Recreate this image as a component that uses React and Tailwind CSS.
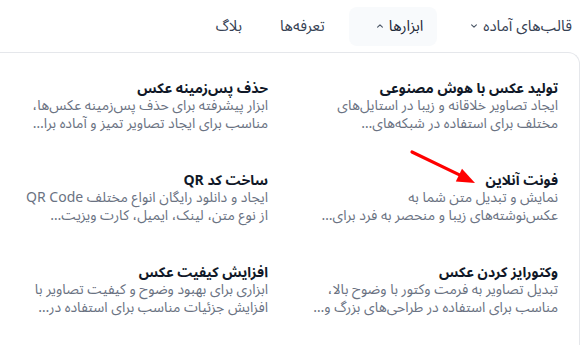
import React from "react";

const items = [
  {
    title: "تولید عکس با هوش مصنوعی",
    l1: "ایجاد تصاویر خلاقانه و زیبا در استایل‌های",
    l2: "مختلف برای استفاده در شبکه‌های…",
  },
  {
    title: "حذف پس‌زمینه عکس",
    l1: "ابزار پیشرفته برای حذف پس‌زمینه عکس‌ها،",
    l2: "مناسب برای ایجاد تصاویر تمیز و آماده برا…",
  },
  {
    title: "فونت آنلاین",
    l1: "نمایش و تبدیل متن شما به",
    l2: "عکس‌نوشته‌های زیبا و منحصر به فرد برای…",
  },
  {
    title: "ساخت کد QR",
    l1: "ایجاد و دانلود رایگان انواع مختلف QR Code",
    l2: "از نوع متن، لینک، ایمیل، کارت ویزیت…",
  },
  {
    title: "وکتورایز کردن عکس",
    l1: "تبدیل تصاویر به فرمت وکتور با وضوح بالا،",
    l2: "مناسب برای استفاده در طراحی‌های بزرگ و…",
  },
  {
    title: "افزایش کیفیت عکس",
    l1: "ابزاری برای بهبود وضوح و کیفیت تصاویر با",
    l2: "افزایش جزئیات مناسب برای استفاده در…",
  },
];

function Chevron({ up }) {
  return (
    <svg width="8" height="8" viewBox="0 0 10 10" className="text-gray-600">
      <path
        d={up ? "M2 6.5 L5 3.5 L8 6.5" : "M2 3.5 L5 6.5 L8 3.5"}
        fill="none"
        stroke="currentColor"
        strokeWidth="1.4"
        strokeLinecap="round"
        strokeLinejoin="round"
      />
    </svg>
  );
}

export default function App() {
  return (
    <div
      dir="rtl"
      className="relative w-[582px] h-[345px] bg-white overflow-hidden font-['Noto_Sans_Arabic','Noto_Sans','DejaVu_Sans',sans-serif]"
    >
      <nav className="flex items-center h-[52px] pr-[10px] text-[15px] text-gray-700">
        <div className="flex items-center gap-[5px] h-[39px] pl-[7px]">
          <span>قالب‌های آماده</span>
          <Chevron />
        </div>
        <div className="flex items-center gap-[5px] h-[39px] pr-[14px] pl-[27px] mr-[26px] rounded-lg bg-slate-50 text-gray-800">
          <span>ابزارها</span>
          <Chevron up />
        </div>
        <div className="flex items-center h-[39px] mr-[24px]">
          <span>تعرفه‌ها</span>
        </div>
        <div className="flex items-center h-[39px] mr-[38px]">
          <span>بلاگ</span>
        </div>
      </nav>
      <div className="w-[620px] mr-[2px] border-t border-r border-gray-200 rounded-tr-xl pt-[27px] pr-[21px]">
        <div className="grid grid-cols-[246px_246px] gap-x-[44px]">
          {items.map((it) => (
            <div key={it.title} className="h-[92px] whitespace-nowrap">
              <div className="text-[14px] font-bold text-gray-900 leading-[17px]">{it.title}</div>
              <div className="text-[14px] leading-[18px] text-gray-500">{it.l1}</div>
              <div className="text-[14px] leading-[18px] text-gray-500">{it.l2}</div>
            </div>
          ))}
        </div>
      </div>
      <svg
        className="absolute left-[405px] top-[145px]"
        width="80"
        height="45"
        viewBox="0 0 80 45"
      >
        <line x1="7" y1="7" x2="56" y2="30.6" stroke="#f00" strokeWidth="3.2" strokeLinecap="round" />
        <polygon points="70,38 50.8,36.4 57,23.8" fill="#f00" />
      </svg>
    </div>
  );
}
